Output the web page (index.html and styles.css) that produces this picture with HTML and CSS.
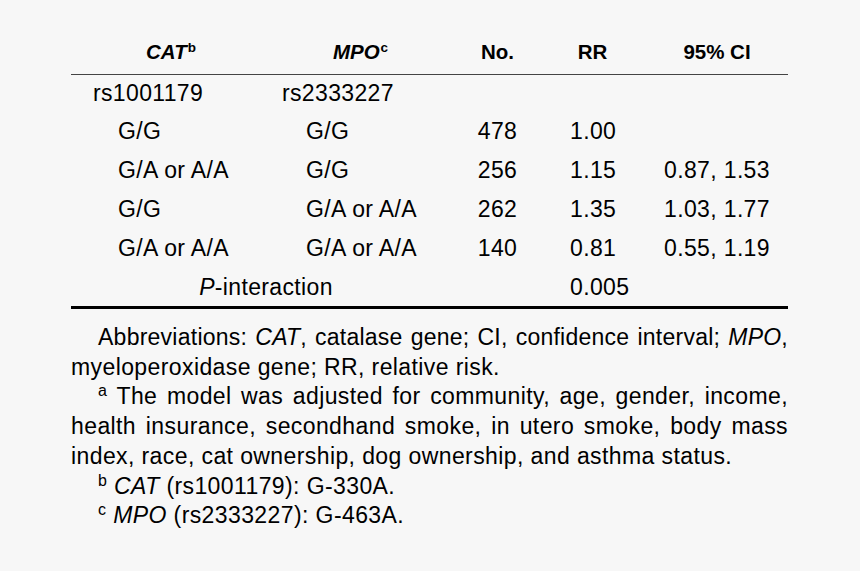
FILE: index.html
```html
<!DOCTYPE html>
<html>
<head>
<meta charset="utf-8">
<link rel="stylesheet" href="styles.css">
</head>
<body>
<div class="page">
  <table class="data">
    <colgroup>
      <col class="w1"><col class="w2"><col class="w3"><col class="w4"><col class="w5">
    </colgroup>
    <thead>
      <tr>
        <th><i>CAT</i><sup class="hs">b</sup></th>
        <th><i>MPO</i><sup class="hs">c</sup></th>
        <th>No.</th>
        <th>RR</th>
        <th class="ci">95% CI</th>
      </tr>
    </thead>
    <tbody>
      <tr class="first">
        <td class="a1">rs1001179</td>
        <td class="a2">rs2333227</td>
        <td></td><td></td><td></td>
      </tr>
      <tr>
        <td class="b1">G/G</td>
        <td class="b2">G/G</td>
        <td class="num">478</td>
        <td class="rr">1.00</td>
        <td class="ci"></td>
      </tr>
      <tr>
        <td class="b1">G/A or A/A</td>
        <td class="b2">G/G</td>
        <td class="num">256</td>
        <td class="rr">1.15</td>
        <td class="ci">0.87, 1.53</td>
      </tr>
      <tr>
        <td class="b1">G/G</td>
        <td class="b2">G/A or A/A</td>
        <td class="num">262</td>
        <td class="rr">1.35</td>
        <td class="ci">1.03, 1.77</td>
      </tr>
      <tr>
        <td class="b1">G/A or A/A</td>
        <td class="b2">G/A or A/A</td>
        <td class="num">140</td>
        <td class="rr">0.81</td>
        <td class="ci">0.55, 1.19</td>
      </tr>
      <tr class="last">
        <td colspan="2" class="pint"><i>P</i>-interaction</td>
        <td></td>
        <td class="rr">0.005</td>
        <td></td>
      </tr>
    </tbody>
  </table>
  <div class="notes">
    <p class="note"><span class="jl ind tight">Abbreviations: <i>CAT</i>, catalase gene; CI, confidence interval; <i>MPO</i>,</span><span class="ln">myeloperoxidase gene; RR, relative risk.</span></p>
    <p class="note"><span class="jl ind"><sup class="fn">a</sup> The model was adjusted for community, age, gender, income,</span><span class="jl">health insurance, secondhand smoke, in utero smoke, body mass</span><span class="ln">index, race, cat ownership, dog ownership, and asthma status.</span></p>
    <p class="note"><span class="ln ind"><sup class="fn">b</sup> <i>CAT</i> (rs1001179): G-330A.</span></p>
    <p class="note"><span class="ln ind"><sup class="fn">c</sup> <i>MPO</i> (rs2333227): G-463A.</span></p>
  </div>
</div>
</body>
</html>
```

FILE: styles.css
```css
html, body {
  margin: 0;
  padding: 0;
  background: #f7f7f7;
}

body {
  font-family: "Liberation Sans", Arial, sans-serif;
  color: #000;
}

.page {
  width: 717px;
  padding: 30px 0 0 71px;
}

.data {
  width: 717px;
  table-layout: fixed;
  border-collapse: separate;
  border-spacing: 0;
  font-size: 23px;
}

.w1 { width: 200px; }
.w2 { width: 179px; }
.w3 { width: 95px; }
.w4 { width: 95px; }
.w5 { width: 148px; }

.data th, .data td {
  padding: 0;
  white-space: nowrap;
  vertical-align: middle;
}

.data th {
  font-size: 20.5px;
  font-weight: bold;
  line-height: 44px;
  text-align: center;
  border-bottom: 1px solid #444;
}

.data th i {
  font-style: italic;
}

.hs {
  font-size: 13.5px;
  font-weight: bold;
  line-height: 0;
  vertical-align: 7px;
  margin-left: 1px;
}

.data td {
  line-height: 39px;
  text-align: left;
  letter-spacing: 0.35px;
}

.data .first td {
  line-height: 37px;
}

.data .last td {
  line-height: 38px;
  border-bottom: 3px solid #000;
}

.a1 { padding-left: 22px !important; }
.a2 { padding-left: 11px !important; }
.b1 { padding-left: 47px !important; }
.b2 { padding-left: 35px !important; }

.data td.num {
  text-align: center;
}

.data td.rr {
  padding-left: 25px;
}

.data .ci {
  text-align: center;
  padding-left: 6px;
}

.data td.pint {
  text-align: center;
  padding-left: 11px;
}

.notes {
  margin-top: 14px;
  width: 717px;
  font-size: 23px;
  line-height: 29.7px;
  letter-spacing: 0.4px;
}

.note {
  margin: 0;
}

.jl, .ln {
  display: block;
  white-space: nowrap;
}

.jl {
  text-align: justify;
  text-align-last: justify;
}

.tight {
  letter-spacing: 0.25px;
}

.ln {
  text-align: left;
}

.ind {
  text-indent: 27px;
}

.fn {
  font-size: 16px;
  line-height: 0;
  vertical-align: 8px;
}
```
